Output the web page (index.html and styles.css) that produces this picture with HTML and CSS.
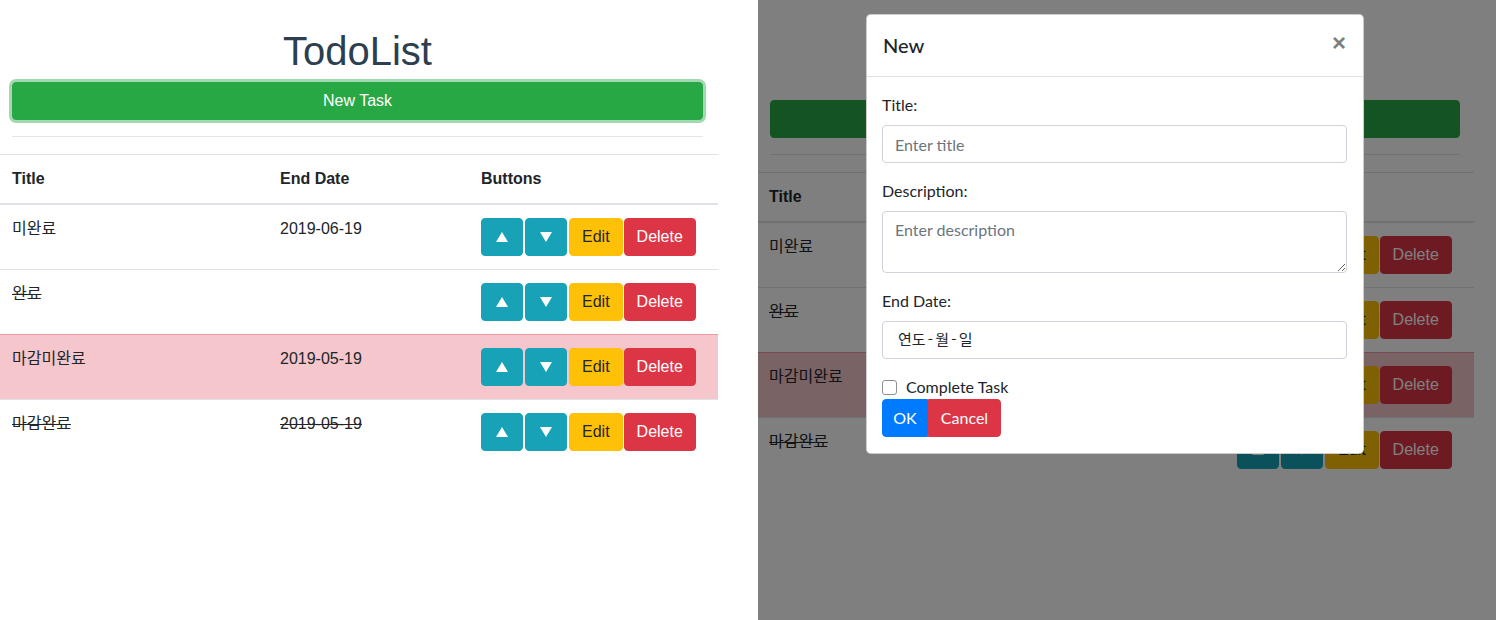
FILE: index.html
```html
<!DOCTYPE html>
<html lang="ko">
<head>
<meta charset="utf-8">
<title>TodoList</title>
<link rel="stylesheet" href="styles.css">
</head>
<body>
<div class="screen">
  <div class="pane pane-left">
    <div class="app">
      <div class="head">
        <h1 class="title">TodoList</h1>
        <button class="btn btn-success btn-block focus">New Task</button>
        <hr class="rule">
      </div>
      <table class="table">
        <colgroup><col class="c1"><col class="c2"><col class="c3"></colgroup>
        <thead>
          <tr><th>Title</th><th>End Date</th><th>Buttons</th></tr>
        </thead>
        <tbody>
          <tr>
            <td>미완료</td><td>2019-06-19</td>
            <td><div class="actions"><button class="btn btn-info" aria-label="▲"><svg class="tri" viewBox="0 0 12 10"><path d="M6 0 L12 10 L0 10 Z"/></svg></button><button class="btn btn-info" aria-label="▼"><svg class="tri" viewBox="0 0 12 10"><path d="M0 0 L12 0 L6 10 Z"/></svg></button><button class="btn btn-warning">Edit</button><button class="btn btn-danger">Delete</button></div></td>
          </tr>
          <tr>
            <td><span class="done">완료</span></td><td></td>
            <td><div class="actions"><button class="btn btn-info" aria-label="▲"><svg class="tri" viewBox="0 0 12 10"><path d="M6 0 L12 10 L0 10 Z"/></svg></button><button class="btn btn-info" aria-label="▼"><svg class="tri" viewBox="0 0 12 10"><path d="M0 0 L12 0 L6 10 Z"/></svg></button><button class="btn btn-warning">Edit</button><button class="btn btn-danger">Delete</button></div></td>
          </tr>
          <tr class="row-danger">
            <td>마감미완료</td><td>2019-05-19</td>
            <td><div class="actions"><button class="btn btn-info" aria-label="▲"><svg class="tri" viewBox="0 0 12 10"><path d="M6 0 L12 10 L0 10 Z"/></svg></button><button class="btn btn-info" aria-label="▼"><svg class="tri" viewBox="0 0 12 10"><path d="M0 0 L12 0 L6 10 Z"/></svg></button><button class="btn btn-warning">Edit</button><button class="btn btn-danger">Delete</button></div></td>
          </tr>
          <tr>
            <td><span class="done">마감완료</span></td><td><span class="done">2019-05-19</span></td>
            <td><div class="actions"><button class="btn btn-info" aria-label="▲"><svg class="tri" viewBox="0 0 12 10"><path d="M6 0 L12 10 L0 10 Z"/></svg></button><button class="btn btn-info" aria-label="▼"><svg class="tri" viewBox="0 0 12 10"><path d="M0 0 L12 0 L6 10 Z"/></svg></button><button class="btn btn-warning">Edit</button><button class="btn btn-danger">Delete</button></div></td>
          </tr>
        </tbody>
      </table>
    </div>
  </div>

  <div class="pane pane-right">
    <div class="app app-shift">
      <div class="head">
        <h1 class="title">TodoList</h1>
        <button class="btn btn-success btn-block">New Task</button>
        <hr class="rule">
      </div>
      <table class="table table-shift">
        <colgroup><col class="c1"><col class="c2"><col class="c3"></colgroup>
        <thead>
          <tr><th>Title</th><th>End Date</th><th>Buttons</th></tr>
        </thead>
        <tbody>
          <tr>
            <td>미완료</td><td>2019-06-19</td>
            <td><div class="actions"><button class="btn btn-info" aria-label="▲"><svg class="tri" viewBox="0 0 12 10"><path d="M6 0 L12 10 L0 10 Z"/></svg></button><button class="btn btn-info" aria-label="▼"><svg class="tri" viewBox="0 0 12 10"><path d="M0 0 L12 0 L6 10 Z"/></svg></button><button class="btn btn-warning">Edit</button><button class="btn btn-danger">Delete</button></div></td>
          </tr>
          <tr>
            <td><span class="done">완료</span></td><td></td>
            <td><div class="actions"><button class="btn btn-info" aria-label="▲"><svg class="tri" viewBox="0 0 12 10"><path d="M6 0 L12 10 L0 10 Z"/></svg></button><button class="btn btn-info" aria-label="▼"><svg class="tri" viewBox="0 0 12 10"><path d="M0 0 L12 0 L6 10 Z"/></svg></button><button class="btn btn-warning">Edit</button><button class="btn btn-danger">Delete</button></div></td>
          </tr>
          <tr class="row-danger">
            <td>마감미완료</td><td>2019-05-19</td>
            <td><div class="actions"><button class="btn btn-info" aria-label="▲"><svg class="tri" viewBox="0 0 12 10"><path d="M6 0 L12 10 L0 10 Z"/></svg></button><button class="btn btn-info" aria-label="▼"><svg class="tri" viewBox="0 0 12 10"><path d="M0 0 L12 0 L6 10 Z"/></svg></button><button class="btn btn-warning">Edit</button><button class="btn btn-danger">Delete</button></div></td>
          </tr>
          <tr>
            <td><span class="done">마감완료</span></td><td><span class="done">2019-05-19</span></td>
            <td><div class="actions"><button class="btn btn-info" aria-label="▲"><svg class="tri" viewBox="0 0 12 10"><path d="M6 0 L12 10 L0 10 Z"/></svg></button><button class="btn btn-info" aria-label="▼"><svg class="tri" viewBox="0 0 12 10"><path d="M0 0 L12 0 L6 10 Z"/></svg></button><button class="btn btn-warning">Edit</button><button class="btn btn-danger">Delete</button></div></td>
          </tr>
        </tbody>
      </table>
    </div>
    <div class="backdrop"></div>
    <div class="modal">
      <div class="modal-header">
        <h5 class="modal-title">New</h5>
        <button class="close" type="button">×</button>
      </div>
      <div class="modal-body">
        <div class="form-group">
          <label class="label">Title:</label>
          <input class="form-control" type="text" placeholder="Enter title">
        </div>
        <div class="form-group">
          <label class="label">Description:</label>
          <textarea class="form-control textarea" rows="2" placeholder="Enter description"></textarea>
        </div>
        <div class="form-group">
          <label class="label">End Date:</label>
          <div class="form-control date-field">연도 - 월 - 일</div>
        </div>
        <div class="form-check">
          <input class="check" type="checkbox">
          <label class="check-label">Complete Task</label>
        </div>
        <div class="btn-group">
          <button class="mbtn mbtn-primary">OK</button><button class="mbtn mbtn-danger">Cancel</button>
        </div>
      </div>
    </div>
  </div>
</div>
</body>
</html>
```

FILE: styles.css
```css
* { box-sizing: border-box; }

html, body {
  margin: 0;
  padding: 0;
  background: #fff;
}

.screen {
  display: flex;
  width: 1496px;
  height: 620px;
  overflow: hidden;
}

.pane {
  position: relative;
  height: 620px;
  overflow: hidden;
  background: #fff;
}

.pane-left { width: 758px; }
.pane-right { width: 738px; }

.app {
  width: 718px;
  padding-top: 27px;
  font-family: "Liberation Sans", Arial, "Noto Sans CJK KR", sans-serif;
  font-size: 16px;
  line-height: 1.5;
  color: #2c3e50;
}

.app-shift { padding-top: 45px; width: 717px; }

.head {
  margin: 0 15px 0 12px;
  text-align: center;
}

.title {
  margin: 0 0 7px;
  font-size: 40px;
  font-weight: 400;
  line-height: 1.2;
  color: #2c3e50;
}

.rule {
  margin: 16px 0 17px;
  border: 0;
  border-top: 1px solid rgba(0, 0, 0, 0.1);
  height: 0;
}

.btn {
  display: inline-flex;
  align-items: center;
  justify-content: center;
  font-family: "Liberation Sans", Arial, sans-serif;
  font-size: 16px;
  line-height: 24px;
  padding: 6px 12px;
  border: 1px solid transparent;
  border-radius: 4px;
  color: #fff;
  cursor: pointer;
  height: 38px;
  white-space: nowrap;
}

.btn-block {
  display: flex;
  width: 100%;
}

.btn-success { background: #28a745; border-color: #28a745; }
.focus { box-shadow: 0 0 0 3px rgba(72, 180, 97, 0.5); }
.btn-info { background: #17a2b8; border-color: #17a2b8; width: 42px; padding: 0; }
.btn-warning { background: #ffc107; border-color: #ffc107; color: #212529; }
.btn-danger { background: #dc3545; border-color: #dc3545; }

.tri {
  width: 12px;
  height: 10px;
  fill: #fff;
  display: block;
}

.table {
  width: 100%;
  border-collapse: collapse;
  color: #212529;
  text-align: left;
}

.table-shift { margin-left: -1px; }

.c1 { width: 268px; }
.c2 { width: 201px; }
.c3 { width: 249px; }

.table th,
.table td {
  padding: 12px;
  vertical-align: top;
  border-top: 1px solid #dee2e6;
  font-family: "Liberation Sans", Arial, "Noto Sans CJK KR", sans-serif;
}

.table thead th {
  vertical-align: bottom;
  border-bottom: 2px solid #dee2e6;
  font-weight: 700;
}

.row-danger td {
  background: #f5c6cb;
  border-top-color: #ed969e;
}

.done { text-decoration: line-through; }

.actions {
  display: flex;
  align-items: flex-start;
  height: 40px;
  padding-top: 1px;
}

.actions .btn + .btn { margin-left: 2px; }
.actions .btn-danger { margin-left: 1px !important; }

.backdrop {
  position: absolute;
  inset: 0;
  background: rgba(0, 0, 0, 0.5);
}

.modal {
  position: absolute;
  left: 108px;
  top: 14px;
  width: 498px;
  background: #fff;
  border: 1px solid rgba(0, 0, 0, 0.2);
  border-radius: 4.8px;
  font-family: Lato, "Noto Sans", "Noto Sans CJK KR", sans-serif;
  font-size: 16px;
  line-height: 1.5;
  color: #212529;
}

.modal-header {
  display: flex;
  align-items: flex-start;
  justify-content: space-between;
  padding: 15px 16px 16px;
  border-bottom: 1px solid #dee2e6;
}

.modal-title {
  margin: 0;
  font-size: 20px;
  font-weight: 500;
  line-height: 1.5;
}

.close {
  margin: -15px -16px -16px auto;
  padding: 16px 17px 16px 16px;
  background: transparent;
  border: 0;
  font-family: "Liberation Sans", Arial, sans-serif;
  font-size: 24px;
  font-weight: 700;
  line-height: 1;
  color: #000;
  opacity: 0.5;
  text-shadow: 0 1px 0 #fff;
}

.modal-body { padding: 16px 16px 16px 15px; }

.form-group { margin-bottom: 16px; }

.label {
  display: inline-block;
  margin-bottom: 8px;
}

.form-control {
  display: block;
  width: 100%;
  height: 38px;
  padding: 6px 12px;
  font-family: Lato, "Noto Sans", "Noto Sans CJK KR", sans-serif;
  font-size: 16px;
  line-height: 1.5;
  color: #495057;
  background: #fff;
  border: 1px solid #ced4da;
  border-radius: 4px;
  outline: none;
}

.form-control::placeholder { color: #6c757d; opacity: 1; }

.textarea {
  height: 62px;
  resize: vertical;
}

.date-field {
  padding-left: 15px;
  font-family: "Noto Sans CJK KR", sans-serif;
  font-size: 15px;
  color: #212529;
  word-spacing: -2px;
}

.form-check {
  display: flex;
  align-items: center;
  height: 24px;
}

.check {
  appearance: none;
  -webkit-appearance: none;
  width: 15px;
  height: 15px;
  margin: 0 9px 0 0;
  border: 1px solid #8f8f8f;
  border-radius: 3px;
  background: #fff;
  flex: none;
}

.btn-group { display: flex; }

.mbtn {
  height: 38px;
  padding: 6px 12px;
  font-family: Lato, "Noto Sans", sans-serif;
  font-size: 16px;
  line-height: 24px;
  color: #fff;
  border: 1px solid transparent;
}

.mbtn-primary {
  background: #007bff;
  border-color: #007bff;
  border-radius: 4px 0 0 4px;
  width: 46px;
  padding: 6px 0;
}

.mbtn-danger {
  background: #dc3545;
  border-color: #dc3545;
  border-radius: 0 4px 4px 0;
  width: 73px;
  padding: 6px 0;
}
```
